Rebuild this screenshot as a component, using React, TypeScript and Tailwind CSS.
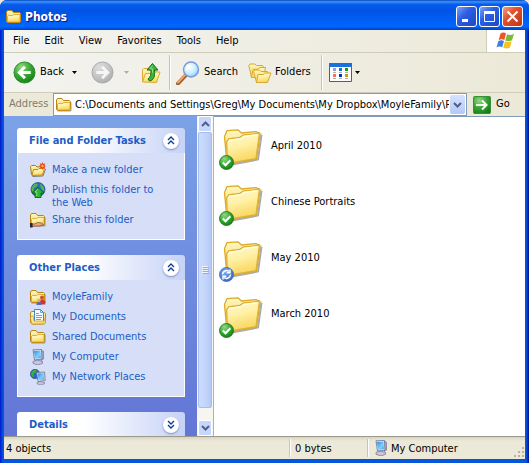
import type { ReactNode } from "react";

function Defs() {
  return (
    <svg className="absolute h-0 w-0" aria-hidden="true">
      <defs>
        <linearGradient id="folder" x1="0" y1="0" x2="0.3" y2="1">
          <stop offset="0" stopColor="#fffbd4" />
          <stop offset="0.5" stopColor="#fff0a4" />
          <stop offset="1" stopColor="#fad65c" />
        </linearGradient>
        <linearGradient id="folderBack" x1="0" y1="0" x2="0" y2="1">
          <stop offset="0" stopColor="#fff8be" />
          <stop offset="1" stopColor="#f2cc58" />
        </linearGradient>
        <radialGradient id="green" cx="0.35" cy="0.25" r="0.85">
          <stop offset="0" stopColor="#8fdc80" />
          <stop offset="0.5" stopColor="#37a833" />
          <stop offset="1" stopColor="#117a14" />
        </radialGradient>
        <radialGradient id="grey" cx="0.35" cy="0.25" r="0.85">
          <stop offset="0" stopColor="#dedede" />
          <stop offset="0.6" stopColor="#c2c2c2" />
          <stop offset="1" stopColor="#aaaaaa" />
        </radialGradient>
        <radialGradient id="blue" cx="0.4" cy="0.3" r="0.8">
          <stop offset="0" stopColor="#7fb0f2" />
          <stop offset="1" stopColor="#2c62c4" />
        </radialGradient>
        <linearGradient id="screen" x1="0" y1="0" x2="1" y2="1">
          <stop offset="0" stopColor="#2f86e8" />
          <stop offset="0.6" stopColor="#7fd0ff" />
          <stop offset="1" stopColor="#3aa0f0" />
        </linearGradient>
        <radialGradient id="lens" cx="0.4" cy="0.35" r="0.7">
          <stop offset="0" stopColor="#ffffff" />
          <stop offset="0.6" stopColor="#c6ecff" />
          <stop offset="1" stopColor="#86c4f4" />
        </radialGradient>
      </defs>
    </svg>
  );
}

function SmallFolder({ children }: { children?: ReactNode }) {
  return (
    <svg width="16" height="16" viewBox="0 0 16 16" className="shrink-0" aria-hidden="true">
      <path d="M1.500 14h13.500V5.500" fill="none" stroke="#5d4a1c" strokeOpacity=".5" />
      <path d="M.5 12.500V3l1-1.500h4.500l1.500 2h6l1 1v8l-1 1h-12z" fill="url(#folderBack)" stroke="#b98510" />
      <path d="M1.500 12.500V7.500l1-1h4l1.500-1h6v7l-.5.500h-11z" fill="url(#folder)" stroke="#d2a02c" strokeWidth=".8" />
      {children}
    </svg>
  );
}

function OpenFolder({ children }: { children?: ReactNode }) {
  return (
    <svg width="16" height="16" viewBox="0 0 16 16" className="shrink-0" aria-hidden="true">
      <path d="M2.500 14.500 13 14l2.500-7" fill="none" stroke="#4a3a14" strokeOpacity=".6" />
      <path d="M1.500 12.500.5 4.500l1-1h4l1.500 1.500 5.500-.5v8z" fill="url(#folderBack)" stroke="#a87c14" />
      <path d="M2 13.500 3.500 7.500h4.500l1-1h5.500L12.500 13z" fill="url(#folder)" stroke="#b98510" strokeWidth=".9" />
      {children}
    </svg>
  );
}

const NewFolderIcon = () => (
  <OpenFolder>
    <path d="m12.500 0 .8 2 1.900-.7-.7 1.900 1.500.8-1.500.8.7 1.900-1.900-.7-.8 2-.8-2-1.900.7.700-1.900-1.500-.8 1.500-.8-.7-1.900 1.900.7z" fill="#e8421c" />
    <circle cx="12.500" cy="4" r="1.200" fill="#ffc23c" />
  </OpenFolder>
);

const PublishIcon = () => (
  <svg width="16" height="16" viewBox="0 0 16 16" className="shrink-0" aria-hidden="true">
    <circle cx="8" cy="7.500" r="7" fill="#276fc4" stroke="#174a86" strokeWidth=".7" />
    <path d="M1.500 5.500 5 1.500 8 2 6.500 4.500 4 6 3.500 10 1.800 9zM10 1.500l3.500 3L14.500 9l-2.500-1-1.500-3z" fill="#55b548" />
    <path d="m8 5.500 6 5.500h-3V15.500H5V11H2z" fill="#2fb535" stroke="#0b6414" strokeWidth=".9" />
    <path d="M8 7 5 10h1.800V14" stroke="#94e88c" fill="none" strokeWidth=".8" />
  </svg>
);

const ShareIcon = () => (
  <SmallFolder>
    <path d="M2 12h2.500l3-1.500 4 .5 2 1.500-3.500 1.500H5l-3 .5z" fill="#f0a878" stroke="#7a4420" strokeWidth=".7" />
    <path d="M0 11h2.500v4.500H0z" fill="#27292e" />
  </SmallFolder>
);

const FamilyFolderIcon = () => (
  <SmallFolder>
    <circle cx="12" cy="8.500" r="2" fill="#ca5426" />
    <path d="M9 15.500v-3l1.500-2h3l1.800 2v3z" fill="#d4352a" />
    <circle cx="9" cy="11.500" r="1.700" fill="#f2a45c" />
    <path d="M6.500 16v-1.500l1.500-1.500h2.500l1 3z" fill="#4b6dc4" />
  </SmallFolder>
);

const DocumentsIcon = () => (
  <svg width="16" height="16" viewBox="0 0 16 16" className="shrink-0" aria-hidden="true">
    <path d="M.5 13V4l1-1.500H5l1 1h8.500l1 1V13l-1.500 2H2z" fill="url(#folderBack)" stroke="#b98510" />
    <path d="M4.500.5h6l3 3v9h-9z" fill="#f4faff" stroke="#4c86b8" />
    <path d="M10.500.5v3h3M6 4.500h3M6 6.500h6M6 8.500h6M6 10.500h5" stroke="#69a7d8" fill="none" />
    <path d="M.5 8 3 7l1 5h10l1.500-4v5.500l-1 1.500h-13z" fill="url(#folder)" stroke="#c9951c" strokeWidth=".7" />
  </svg>
);

const ComputerIcon = () => (
  <svg width="16" height="16" viewBox="0 0 16 16" className="shrink-0" aria-hidden="true">
    <path d="m3 12.500 4-1.500 5.500 1.500v1.800L8 16l-5-1.700z" fill="#c9c6dc" stroke="#716d90" strokeWidth=".7" />
    <path d="m11 1 2.500 1.200V10L11 11.500z" fill="#aaa9c4" stroke="#6b6a88" strokeWidth=".6" />
    <path d="m3 .8 8.500-.3.5 9.500-7.500 1z" fill="#dbe5f5" stroke="#646e98" strokeWidth=".8" />
    <path d="m4 2 6.500-.3.400 7.300-5.700.8z" fill="url(#screen)" />
  </svg>
);

const NetworkIcon = () => (
  <svg width="16" height="16" viewBox="0 0 16 16" className="shrink-0" aria-hidden="true">
    <circle cx="5" cy="5" r="4.700" fill="#2467c2" stroke="#164684" strokeWidth=".6" />
    <path d="M1 4 4 .8 7 1 5.500 3.500l-2 1.500L4 8 2 7.500z" fill="#41ae3c" />
    <path d="m7 13.500 3-1 4.500 1v1.200L11 16l-4-1.200z" fill="#c9c6dc" stroke="#716d90" strokeWidth=".6" />
    <path d="m6.500 3.500 8-.5.7 8.500-7.200 1z" fill="#dbe5f5" stroke="#646e98" strokeWidth=".8" />
    <path d="m7.600 4.600 6-.4.500 6.300-5.500.8z" fill="url(#screen)" />
  </svg>
);

function WindowsFlag() {
  return (
    <svg width="20" height="18" viewBox="0 0 20 18" aria-hidden="true">
      <path d="M4.500 1.500C6.500.2 8.500.3 10 1.500L8.300 8C6.700 6.900 4.700 6.900 2.700 8z" fill="#ee5524" />
      <path d="M11 2.200c2 1 4.500 1 7-.5L16 8.200c-2.300 1.300-4.500 1.300-6.700.2z" fill="#7abb35" />
      <path d="M2.400 9c2-1.100 4-1.100 5.600 0l-1.800 6.300c-1.800-1-3.600-1-5.700.2z" fill="#3c7de0" />
      <path d="M9 9.300c2.200 1.100 4.300 1.100 6.700-.1L14 15.500c-2.300 1.300-4.600 1.300-6.800.2z" fill="#f8c022" />
    </svg>
  );
}

function ArrowCircle({ tone }: { tone: "back" | "forward" }) {
  const back = tone === "back";
  return (
    <svg width="23" height="23" viewBox="0 0 24 24" aria-hidden="true">
      <circle cx="12" cy="12" r="11" fill={back ? "url(#green)" : "url(#grey)"} stroke={back ? "#2c8a2c" : "#a8a8a8"} />
      <path
        d={back ? "M18.500 12H7M12.500 6l-6 6 6 6" : "M5.500 12H17M11.500 6l6 6-6 6"}
        fill="none"
        stroke={back ? "#ffffff" : "#f6f6f6"}
        strokeWidth="3"
      />
    </svg>
  );
}

function UpFolder() {
  return (
    <svg width="20" height="22" viewBox="0 0 20 22" aria-hidden="true">
      <path d="M1.500 19.500V7.500l1-1h4L8 8h7v11z" fill="url(#folderBack)" stroke="#dcac34" />
      <path d="m1.500 20 3-8.500h5l1-1.500h8.500L15.500 20.500z" fill="url(#folder)" stroke="#dcac34" />
      <path d="M8.500 19c4.500-1 5.500-4.500 5-11h3.500L11.500 1.500 6 8h4c.2 4.500-.5 7-3 9z" fill="#3db53a" stroke="#127018" />
      <path d="M11.500 3.500 9 6.800h2.500v4" fill="none" stroke="#8ee080" />
    </svg>
  );
}

function SearchIcon() {
  return (
    <svg width="24" height="24" viewBox="0 0 24 24" aria-hidden="true">
      <path d="m9.500 14.500-7.500 8" stroke="#9c5b30" strokeWidth="4" strokeLinecap="round" />
      <path d="m9 14-7 7.500" stroke="#f2a468" strokeWidth="2" strokeLinecap="round" />
      <circle cx="15" cy="8.500" r="7.500" fill="url(#lens)" stroke="#7899d8" strokeWidth="1.400" />
      <path d="M10.500 8.500c.5-2.500 2-4 4.500-4" fill="none" stroke="#fff" strokeWidth="1.600" />
    </svg>
  );
}

function FoldersIcon() {
  return (
    <svg width="24" height="22" viewBox="0 0 24 22" aria-hidden="true">
      <path d="M3.500 15.500.8 3.500 2 2h5l1.500 1.500h6l1 1.500v3l-7 1z" fill="url(#folderBack)" stroke="#d9a92f" />
      <path d="m3.500 15.500 1.500-8 5.500-.5 1-1.500h6l-2 10z" fill="url(#folder)" stroke="#d9a92f" />
      <path d="M8.500 20.500 5.500 9.500 7 8h4.500l1.500 1.500h6.500l1 2L19 20z" fill="url(#folderBack)" stroke="#d9a92f" />
      <path d="m8.500 20.500 1.500-8h5.500l1-1.500h6.500l-3.500 9.500z" fill="url(#folder)" stroke="#d9a92f" />
    </svg>
  );
}

function ViewsIcon() {
  const cells: [number, number, string][] = [
    [4, 5, "#9c9cd8"], [10, 5, "#0878e0"], [16, 5, "#12a012"],
    [4, 11, "#ff7048"], [10, 11, "#0038a8"], [16, 11, "#d09c00"],
  ];
  return (
    <svg width="23" height="19" viewBox="0 0 23 19" aria-hidden="true">
      <path d="M.5.500h22v18H.5z" fill="#fff" stroke="#1c66cc" />
      <path d="M0 0h23v4H0z" fill="#1c70dc" />
      {cells.map(([x, y, c]) => (
        <g key={c}>
          <rect x={x} y={y} width="3" height="3" fill={c} />
          <rect x={x} y={y + 4} width="3" height="1" fill="#b0b0b0" />
        </g>
      ))}
    </svg>
  );
}

const Caret = ({ color }: { color: string }) => (
  <svg width="5" height="3" viewBox="0 0 5 3" aria-hidden="true">
    <path d="M0 0h5L2.500 3z" fill={color} />
  </svg>
);

const Chevron = ({ up }: { up?: boolean }) => (
  <svg width="9" height="6" viewBox="0 0 9 6" aria-hidden="true">
    <path d={up ? "m1 5 3.500-3.500L8 5" : "m1 1 3.500 3.500L8 1"} fill="none" stroke="#4d6185" strokeWidth="2" />
  </svg>
);

function TitleButton({ label, close, children }: { label: string; close?: boolean; children: ReactNode }) {
  return (
    <button
      aria-label={label}
      className={`flex size-[21px] items-center justify-center rounded-[3px] border border-white ${
        close
          ? "bg-[linear-gradient(135deg,#f0a088,#e0502c_40%,#c0341a)]"
          : "bg-[linear-gradient(135deg,#7ca4f8,#2c5ee4_40%,#1c48c4)]"
      }`}
    >
      <svg width="13" height="13" viewBox="0 0 13 13" aria-hidden="true">{children}</svg>
    </button>
  );
}

function Panel({ title, open, children }: { title: string; open?: boolean; children?: ReactNode }) {
  return (
    <section>
      <h2 className="flex h-[25px] items-center justify-between rounded-t-[3px] bg-[linear-gradient(90deg,#fff_40%,#c6d3f7)] pr-[6px] pl-3 font-bold text-[#215dc6]">
        <span className="pt-0.5">{title}</span>
        <button
          aria-label={open ? `Collapse ${title}` : `Expand ${title}`}
          className="flex size-4 items-center justify-center rounded-full bg-white shadow-[0_1px_2px_#7c8cc0]"
        >
          <svg width="8" height="9" viewBox="0 0 8 9" aria-hidden="true">
            <path
              d={open ? "m1 4 3-3 3 3M1 8l3-3 3 3" : "m1 1 3 3 3-3M1 5l3 3 3-3"}
              fill="none"
              stroke="#123c94"
              strokeWidth="1.400"
            />
          </svg>
        </button>
      </h2>
      {children && (
        <ul className="flex flex-col gap-1 border border-t-0 border-white bg-[#d6dff7] px-3 pt-[9px] pb-[11px]">{children}</ul>
      )}
    </section>
  );
}

function Task({ icon, children }: { icon: ReactNode; children: ReactNode }) {
  return (
    <li>
      <a href="#" className="flex gap-[6px] leading-[13px] text-[#215dc6]">
        {icon}
        <span className="-mb-px pt-px">{children}</span>
      </a>
    </li>
  );
}

function BigFolder({ name, syncing }: { name: string; syncing?: boolean }) {
  return (
    <li className="flex h-12 items-center gap-1">
      <svg width="48" height="48" viewBox="0 0 48 48" className="shrink-0" aria-hidden="true">
        <path d="m10 43 29-5.500 3.500-25" fill="none" stroke="#555555" strokeOpacity=".5" strokeWidth="2" />
        <path d="m8 41.500-2.500-27 2.500-6 11-.7 3.500 3.200 14.500-1.300 4 1.800-3.500 25.500z" fill="url(#folderBack)" stroke="#dcaa26" strokeWidth="1.300" />
        <path d="m8.500 41.500-.8-21.500 2-3.200 11-1.300 3.800-2.500 16-1.800-3.500 25.500z" fill="url(#folder)" stroke="#e0b030" strokeWidth="1.300" />
        <path d="m9.500 20 1.500-2 10.500-1.300 3.500-2.300 13.500-1.600" fill="none" stroke="#fffdec" strokeWidth="1.300" />
        <circle cx="7.500" cy="40.500" r="7" fill={syncing ? "url(#blue)" : "url(#green)"} stroke={syncing ? "#3767b8" : "#176f18"} strokeWidth=".8" />
        {syncing ? (
          <g fill="none" stroke="#fff" strokeWidth="1.500">
            <path d="M3.500 40.500a4 4 0 0 1 6.500-3M11.500 40.500a4 4 0 0 1-6.500 3" />
            <path d="M11 35.500v3.200H7.800M4 45.500v-3.200h3.200" />
          </g>
        ) : (
          <path d="m3.800 40.500 2.700 2.700 4.800-5" fill="none" stroke="#fff" strokeWidth="2.200" />
        )}
      </svg>
      <span>{name}</span>
    </li>
  );
}

const Grip = () => <span className="h-full w-0.5 border-r border-l border-r-white border-l-[#c9c5b2]" />;

export default function App() {
  return (
    <div className="bg-[#ece9d8]">
      <Defs />
      <main className="flex h-screen flex-col overflow-hidden rounded-t-[7px] bg-[linear-gradient(90deg,#0019cf,#0855dd_3px,#0855dd_calc(100%_-_3px),#001298)] font-['DejaVu_Sans_Condensed','Noto_Sans',sans-serif] text-[11px] text-black">
        <header className="flex h-[30px] shrink-0 items-center gap-0.5 bg-[linear-gradient(180deg,#0848b8,#3c94ff_6%,#0a5cec_14%,#0054e4_35%,#0062fa_75%,#0066ff_88%,#0040c4)] pt-[3px] pr-[6px] pl-[6px]">
          <SmallFolder />
          <h1 className="flex-1 pl-px text-xs font-bold text-white [text-shadow:1px_1px_1px_#0a1883]">Photos</h1>
          <TitleButton label="Minimize"><path d="M2 9h6v3H2z" fill="#fff" /></TitleButton>
          <TitleButton label="Maximize">
            <path d="M1.500 1.500h10v10h-10z" fill="none" stroke="#fff" />
            <path d="M1 1h11v3H1z" fill="#fff" />
          </TitleButton>
          <TitleButton label="Close" close><path d="m1.500 1.500 10 10m0-10-10 10" stroke="#fff" strokeWidth="2" /></TitleButton>
        </header>

        <div className="mr-1 mb-1 ml-1 flex min-h-0 flex-1 flex-col bg-[#ece9d8]">
          <div className="flex h-[23px] shrink-0 border-b border-[#d0ccba] bg-[linear-gradient(90deg,#f3f3f0,#ece9d8)]">
            <nav className="flex flex-1 items-center gap-[15px] pl-[9px]">
              {["File", "Edit", "View", "Favorites", "Tools", "Help"].map((m) => (
                <button key={m}>{m}</button>
              ))}
            </nav>
            <div className="flex w-[39px] items-center justify-center border-l border-[#d0ccba] bg-white">
              <WindowsFlag />
            </div>
          </div>

          <div className="flex h-10 shrink-0 items-center border-b border-[#d0ccba] bg-[linear-gradient(90deg,#f3f3f0,#ece9d8)] py-[2px] pl-[9px]">
            <button className="flex items-center gap-1"><ArrowCircle tone="back" />Back</button>
            <button aria-label="Back history" className="ml-2"><Caret color="#000" /></button>
            <button aria-label="Forward" className="ml-[14px]"><ArrowCircle tone="forward" /></button>
            <button aria-label="Forward history" className="ml-[10px]"><Caret color="#b0aea4" /></button>
            <button aria-label="Up" className="ml-3"><UpFolder /></button>
            <span className="ml-2 flex h-full"><Grip /></span>
            <button className="ml-[5px] flex items-center gap-1"><SearchIcon />Search</button>
            <button className="ml-[10px] flex items-center gap-[3px]"><FoldersIcon />Folders</button>
            <span className="ml-[10px] flex h-full"><Grip /></span>
            <button aria-label="Views" className="ml-[6px] flex items-center gap-[3px]"><ViewsIcon /><Caret color="#000" /></button>
          </div>

          <div className="flex h-[23px] shrink-0 items-center pr-1 pl-[5px]">
            <label htmlFor="address" className="w-11 text-[#7f7c73]">Address</label>
            <div className="flex h-full min-w-0 flex-1 items-center border border-[#7f9db9] bg-white pl-0.5">
              <SmallFolder />
              <input
                id="address"
                className="ml-[3px] min-w-0 flex-1 bg-white pt-px outline-none"
                defaultValue="C:\Documents and Settings\Greg\My Documents\My Dropbox\MoyleFamily\Photos"
              />
              <button aria-label="Show addresses" className="m-px flex h-[19px] w-[15px] items-center justify-center rounded-[2px] bg-[linear-gradient(180deg,#d6e2ff,#b4c8f6)]">
                <Chevron />
              </button>
            </div>
            <button className="flex w-[54px] items-center gap-[5px] pl-[6px]">
              <svg width="18" height="18" viewBox="0 0 18 18" aria-hidden="true">
                <rect x=".5" y=".5" width="17" height="17" rx="1" fill="url(#green)" stroke="#3b8c3b" />
                <path d="M3 9h10M9 4.500 13.500 9 9 13.500" fill="none" stroke="#fff" strokeWidth="2" />
              </svg>
              Go
            </button>
          </div>

          <div className="flex min-h-0 flex-1">
            <aside className="flex w-[193px] shrink-0 flex-col gap-[15px] overflow-hidden bg-[linear-gradient(180deg,#7ba2e7,#6375d6)] pt-3 pr-3 pl-[13px]">
              <Panel title="File and Folder Tasks" open>
                <Task icon={<NewFolderIcon />}>Make a new folder</Task>
                <Task icon={<PublishIcon />}>Publish this folder to<br />the Web</Task>
                <Task icon={<ShareIcon />}>Share this folder</Task>
              </Panel>
              <Panel title="Other Places" open>
                <Task icon={<FamilyFolderIcon />}>MoyleFamily</Task>
                <Task icon={<DocumentsIcon />}>My Documents</Task>
                <Task icon={<SmallFolder />}>Shared Documents</Task>
                <Task icon={<ComputerIcon />}>My Computer</Task>
                <Task icon={<NetworkIcon />}>My Network Places</Task>
              </Panel>
              <Panel title="Details" />
            </aside>

            <div className="flex w-[17px] shrink-0 flex-col border-r border-[#9db4d4] bg-[#f6f5f0] px-px">
              <button aria-label="Scroll up" className="flex h-4 shrink-0 items-center justify-center rounded-[2px] border border-white bg-[#c6d6fc]"><Chevron up /></button>
              <div className="flex flex-1 flex-col items-center justify-center rounded-[2px] border border-[#a8bdea] bg-[linear-gradient(90deg,#cddcff,#c2d4fc_60%,#b4c8f6)]">
                <svg width="7" height="8" viewBox="0 0 7 8" aria-hidden="true">
                  <path d="M0 .5h6M0 2.500h6M0 4.500h6M0 6.500h6" stroke="#f0f5ff" />
                  <path d="M1 1.500h6M1 3.500h6M1 5.500h6M1 7.500h6" stroke="#8faae0" />
                </svg>
              </div>
              <button aria-label="Scroll down" className="mt-3 flex h-4 shrink-0 items-center justify-center rounded-[2px] border border-white bg-[#c6d6fc]"><Chevron /></button>
            </div>

            <ul className="flex min-w-0 flex-1 flex-col gap-2 border-t border-[#7f9db9] bg-white pt-[5px] pl-[5px]">
              <BigFolder name="April 2010" />
              <BigFolder name="Chinese Portraits" />
              <BigFolder name="May 2010" syncing />
              <BigFolder name="March 2010" />
            </ul>
          </div>

          <footer className="flex h-[23px] shrink-0 items-center border-t border-[#9c9a8c] bg-[linear-gradient(180deg,#d6d3c2,#ece9d8_4px)] py-0.5 pl-0.5">
            <span className="flex-1 pt-0.5">4 objects</span>
            <Grip />
            <span className="w-[76px] pt-0.5 pl-1">0 bytes</span>
            <Grip />
            <span className="flex w-36 items-center gap-0.5 pl-1">
              <ComputerIcon />
              <span className="pt-0.5">My Computer</span>
            </span>
            <svg width="12" height="12" viewBox="0 0 12 12" className="mt-2" aria-hidden="true">
              <path d="M9 1h2v2H9zM5 5h2v2H5zM9 5h2v2H9zM1 9h2v2H1zM5 9h2v2H5zM9 9h2v2H9z" fill="#b8b4a2" />
            </svg>
          </footer>
        </div>
      </main>
    </div>
  );
}
